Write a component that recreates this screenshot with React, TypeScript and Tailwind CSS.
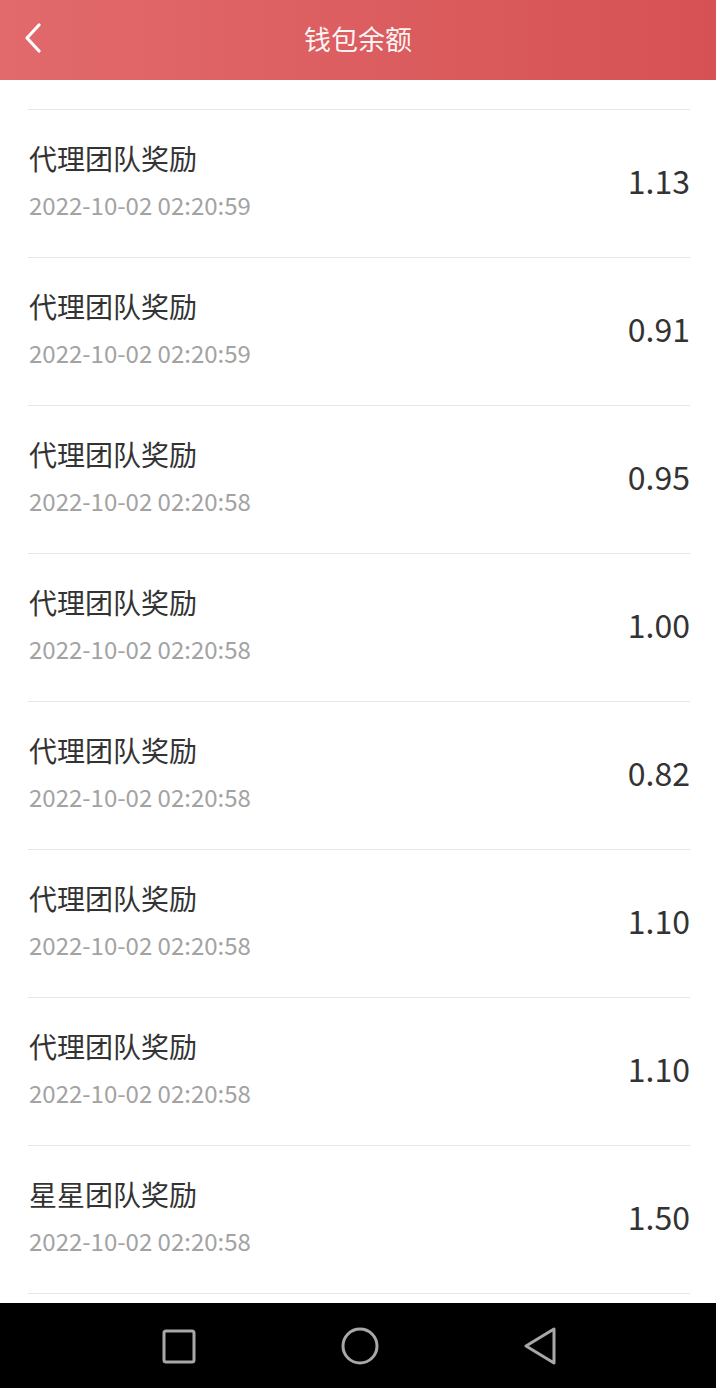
import React from 'react';

type Record = {
  title: string;
  time: string;
  amount: string;
};

const records: Record[] = [
  { title: '代理团队奖励', time: '2022-10-02 02:20:59', amount: '1.13' },
  { title: '代理团队奖励', time: '2022-10-02 02:20:59', amount: '0.91' },
  { title: '代理团队奖励', time: '2022-10-02 02:20:58', amount: '0.95' },
  { title: '代理团队奖励', time: '2022-10-02 02:20:58', amount: '1.00' },
  { title: '代理团队奖励', time: '2022-10-02 02:20:58', amount: '0.82' },
  { title: '代理团队奖励', time: '2022-10-02 02:20:58', amount: '1.10' },
  { title: '代理团队奖励', time: '2022-10-02 02:20:58', amount: '1.10' },
  { title: '星星团队奖励', time: '2022-10-02 02:20:58', amount: '1.50' },
];

const font = { fontFamily: '"Noto Sans CJK SC", "Noto Sans", sans-serif' };

export default function App() {
  return (
    <div className="flex h-[1388px] w-[716px] flex-col overflow-hidden bg-white" style={font}>
      {/* Header */}
      <div className="relative flex h-[80px] shrink-0 items-center justify-center bg-gradient-to-r from-[#e26a6c] to-[#d65153] pb-[4px]">
        <button className="absolute left-[20px] top-[22px] flex h-[32px] w-[26px] items-center justify-center">
          <svg width="20" height="30" viewBox="0 0 20 30" fill="none">
            <path d="M16 2 L4 15 L16 28" stroke="#fff" strokeWidth="3.2" strokeLinecap="round" strokeLinejoin="round" />
          </svg>
        </button>
        <h1 className="text-[27px] leading-none text-white/95">钱包余额</h1>
      </div>

      {/* List */}
      <div className="flex-1 overflow-hidden pl-[28px] pr-[26px] pt-[29px]">
        {records.map((r, i) => (
          <div key={i} className="flex h-[148px] items-center justify-between border-t border-[#e6e6e6] pb-[7px]">
            <div className="flex flex-col gap-[14px] pl-px">
              <div className="text-[28px] leading-[36px] text-[#333]">{r.title}</div>
              <div className="text-[24px] leading-[30px] text-[#a3a3a3]">{r.time}</div>
            </div>
            <div className="text-[32px] leading-none text-[#333]">{r.amount}</div>
          </div>
        ))}
        <div className="border-t border-[#e6e6e6]" />
      </div>

      {/* System nav bar */}
      <div className="flex h-[85px] shrink-0 items-center justify-center gap-[144px] bg-black pl-[2px]">
        <svg width="36" height="36" viewBox="0 0 36 36" fill="none">
          <rect x="3" y="3" width="30" height="31" rx="2" stroke="#a8a8a8" strokeWidth="3" />
        </svg>
        <svg width="38" height="38" viewBox="0 0 38 38" fill="none">
          <circle cx="19" cy="19" r="17" stroke="#a8a8a8" strokeWidth="3" />
        </svg>
        <svg width="34" height="38" viewBox="0 0 34 38" fill="none">
          <path d="M31 2 L3 19 L31 36 Z" stroke="#a8a8a8" strokeWidth="3" strokeLinejoin="round" />
        </svg>
      </div>
    </div>
  );
}
